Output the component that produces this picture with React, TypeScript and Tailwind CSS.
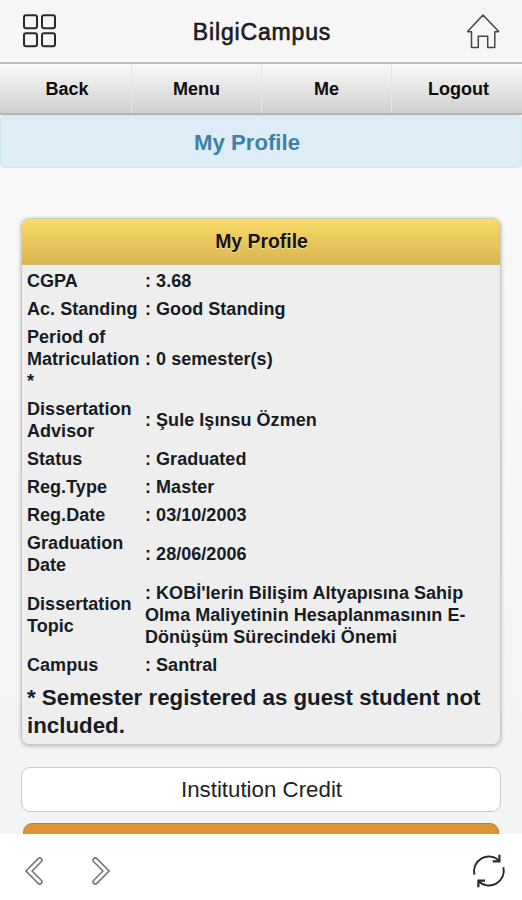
import React from "react";

const rows: { label: string[]; value: string[] }[] = [
  { label: ["CGPA"], value: [": 3.68"] },
  { label: ["Ac. Standing"], value: [": Good Standing"] },
  { label: ["Period of", "Matriculation", "*"], value: [": 0 semester(s)"] },
  { label: ["Dissertation", "Advisor"], value: [": Şule Işınsu Özmen"] },
  { label: ["Status"], value: [": Graduated"] },
  { label: ["Reg.Type"], value: [": Master"] },
  { label: ["Reg.Date"], value: [": 03/10/2003"] },
  { label: ["Graduation", "Date"], value: [": 28/06/2006"] },
  {
    label: ["Dissertation", "Topic"],
    value: [
      ": KOBİ'lerin Bilişim Altyapısına Sahip",
      "Olma Maliyetinin Hesaplanmasının E-",
      "Dönüşüm Sürecindeki Önemi",
    ],
  },
  { label: ["Campus"], value: [": Santral"] },
];

const tabs = [
  { name: "Back", style: "border-r border-[#e6e6e6] pl-[3px]" },
  { name: "Menu", style: "border-r border-[#e6e6e6]" },
  { name: "Me", style: "border-r border-[#e6e6e6]" },
  { name: "Logout", style: "pl-[3px]" },
];

function Lines({ lines, className }: { lines: string[]; className: string }) {
  return (
    <div className={className}>
      {lines.map((line) => (
        <div key={line}>{line}</div>
      ))}
    </div>
  );
}

function GridIcon() {
  return (
    <svg width="36" height="36" viewBox="0 0 36 36" fill="none" stroke="#2a2a2a" strokeWidth="2">
      <rect x="2" y="2.2" width="13" height="13" rx="2" />
      <rect x="20" y="2.2" width="13" height="13" rx="2" />
      <rect x="2" y="20.2" width="13" height="13" rx="2" />
      <rect x="20" y="20.2" width="13" height="13" rx="2" />
    </svg>
  );
}

function HomeIcon() {
  return (
    <svg width="34" height="36" viewBox="0 0 34 36" fill="none" stroke="#444" strokeWidth="1.5" strokeLinejoin="round">
      <path d="M17 2 L1.8 18.2 V18.8 H5.5 V34.5 H12.3 V23.2 H21.7 V34.5 H28.8 V18.8 H32.5 V18.2 Z" />
    </svg>
  );
}

function Chevron({ flip = false }: { flip?: boolean }) {
  return (
    <svg width="20" height="30" viewBox="0 0 20 30" fill="none" className={flip ? "-scale-x-100" : ""}>
      <path d="M15.7 4.2 L5 15 L15.7 25.8" stroke="#777" strokeWidth="6" strokeLinecap="round" strokeLinejoin="miter" />
      <path d="M15.7 4.2 L5 15 L15.7 25.8" stroke="#fff" strokeWidth="2.8" strokeLinecap="round" strokeLinejoin="miter" />
    </svg>
  );
}

function RefreshIcon() {
  return (
    <svg width="36" height="36" viewBox="0 0 36 36" fill="none" stroke="#2a2a2a" strokeWidth="1.9">
      <path d="M3.4 21.8 A14.8 14.8 0 0 1 28.4 8" />
      <path d="M32.4 14.2 A14.8 14.8 0 0 1 7.4 28" />
      <path d="M28.4 1.8 V8.4 H21.8" strokeWidth="2.2" />
      <path d="M7.4 34.2 V27.6 H14" strokeWidth="2.2" />
    </svg>
  );
}

export default function App() {
  return (
    <div className="flex h-[900px] w-[522px] flex-col overflow-hidden bg-[#f6f6f6] font-['Liberation_Sans',Arial,sans-serif] text-[#161b24]">
      <header className="flex h-[62px] shrink-0 items-center justify-between px-[22px]">
        <GridIcon />
        <h1 className="pt-0.5 text-[23px] leading-7 tracking-[0.85px] text-[#1b1b1b] [-webkit-text-stroke:0.6px_#1b1b1b]">
          BilgiCampus
        </h1>
        <HomeIcon />
      </header>

      <nav className="grid h-[53px] shrink-0 grid-cols-[132px_130px_130px_130px] border-t-2 border-b-2 border-t-[#bdbdbd] border-b-[#b3b6b8] bg-linear-to-b from-[#fafafa] to-[#cfcfcf] text-[18px] font-bold text-[#0c0c0c]">
        {tabs.map((tab) => (
          <div key={tab.name} className={`flex items-center justify-center pt-px ${tab.style}`}>
            {tab.name}
          </div>
        ))}
      </nav>

      <div className="flex h-[53px] shrink-0 items-center justify-center rounded-[5px] border border-[#cde7ef] bg-[#deecf6] pt-0.5 pr-7 text-[22.2px] font-bold text-[#3f7fab]">
        My Profile
      </div>

      <main className="flex min-h-0 flex-1 flex-col overflow-hidden bg-linear-to-b from-[#f8f8f8] to-[#f3f4f5] px-[21px] pt-[50px]">
        <section className="h-[527px] shrink-0 overflow-hidden rounded-[8px] border border-[#c8c8c8] bg-[#eeeeee] shadow-[0_1px_4px_rgba(0,0,0,0.25)]">
          <h2 className="flex h-[46px] items-center justify-center border-b border-[#d0b778] bg-linear-to-b from-[#f8dc68] to-[#d9b451] pt-px pl-px text-[19.4px] font-bold text-[#15130c] [text-shadow:0_1px_0_#f3e3a0]">
            My Profile
          </h2>
          <div className="pt-0.5 pl-[5px]">
            {rows.map((row) => (
              <div
                key={row.label.join(" ")}
                className="flex items-center py-[3px] text-[18px] leading-[22px] font-bold tracking-[0.04px] whitespace-nowrap"
              >
                <Lines lines={row.label} className="w-[118px]" />
                <Lines lines={row.value} className="flex-1" />
              </div>
            ))}
          </div>
          <p className="pt-[5px] pl-[5px] text-[22.3px] leading-7 font-bold whitespace-nowrap">
            * Semester registered as guest student not
            <br />
            included.
          </p>
        </section>

        <button className="mt-[22px] h-[45px] shrink-0 rounded-[9px] border-[1.5px] border-[#c9c9c9] bg-white pl-px text-[22.3px] text-[#222]">
          Institution Credit
        </button>
        <div className="mx-0.5 mt-[11px] h-[45px] shrink-0 rounded-[9px] border border-[#c4801f] bg-[#de9533]" />
      </main>

      <footer className="flex h-[66px] shrink-0 items-center bg-white pt-2 pr-[15px] pl-6">
        <Chevron />
        <div className="ml-[47px]">
          <Chevron flip />
        </div>
        <div className="ml-auto">
          <RefreshIcon />
        </div>
      </footer>
    </div>
  );
}
